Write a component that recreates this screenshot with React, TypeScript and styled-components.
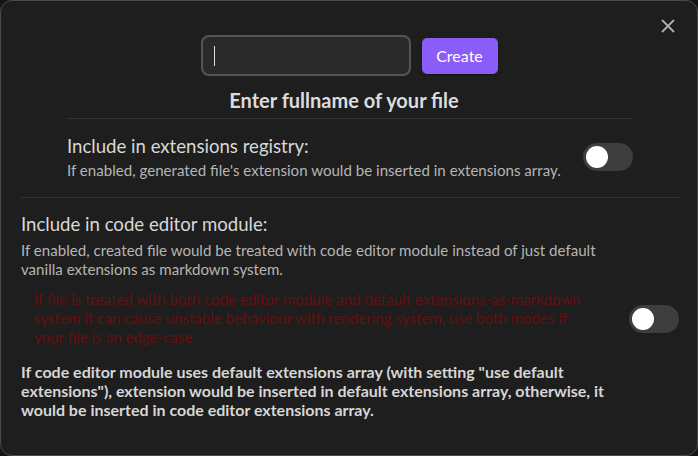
import React from "react";
import styled, { createGlobalStyle } from "styled-components";

const Global = createGlobalStyle`
  html, body { margin: 0; padding: 0; background: #141414; }
  body { font-family: "Lato", "Noto Sans", sans-serif; }
  * { box-sizing: border-box; }
`;

const Modal = styled.div`
  position: relative;
  width: 698px;
  height: 456px;
  background: #1e1e1e;
  border: 1px solid #4a4a4a;
  border-radius: 12px;
  padding: 34px 18px 0 20px;
  display: flex;
  flex-direction: column;
  color: #dadada;
  overflow: hidden;
`;

const Close = styled.button`
  position: absolute;
  top: 16px;
  right: 20px;
  width: 18px;
  height: 18px;
  padding: 0;
  border: none;
  background: none;
  color: #b0b0b0;
  display: flex;
  align-items: center;
  justify-content: center;
`;

const Header = styled.div`
  display: flex;
  justify-content: center;
  align-items: center;
  gap: 11px;
  margin-right: 2px;
`;

const NameInput = styled.div`
  width: 210px;
  height: 41px;
  border: 2px solid #545454;
  border-radius: 8px;
  background: #2a2a2a;
  display: flex;
  align-items: center;
  padding-left: 11px;
`;

const Caret = styled.span`
  width: 1px;
  height: 20px;
  background: #e0e0e0;
`;

const CreateButton = styled.button`
  width: 76px;
  height: 36px;
  border: none;
  border-radius: 5px;
  background: #8b5cf6;
  color: #fff;
  font-family: inherit;
  font-size: 16px;
  box-shadow: 0 1px 2px rgba(0,0,0,0.4);
`;

const Title = styled.div`
  text-align: center;
  font-weight: 700;
  font-size: 20px;
  margin-top: 12px;
  margin-right: 12px;
  color: #dcdcdc;
  line-height: 24px;
`;

const SettingRow = styled.div`
  display: flex;
  align-items: center;
  justify-content: space-between;
  margin: 6px 46px 0 46px;
  padding-top: 14px;
  border-top: 1px solid #333;
`;

const SettingInfo = styled.div`
  display: flex;
  flex-direction: column;
`;

const SettingName = styled.div`
  font-size: 18.6px;
  line-height: 26px;
  color: #d8d8d8;
`;

const SettingDesc = styled.div<{ $tone?: "warn"; $gap?: number }>`
  font-size: 15.1px;
  line-height: 19px;
  margin-top: ${(p) => p.$gap ?? 0}px;
  color: ${(p) => (p.$tone === "warn" ? "#660f0f" : "#b5b5b5")};
  max-width: 590px;
`;

const Divider = styled.div`
  height: 1px;
  background: #333;
  margin-top: 17px;
`;

const Section = styled.div`
  display: flex;
  flex-direction: column;
  padding-top: 13px;
`;

const WarnRow = styled.div`
  display: flex;
  align-items: center;
  justify-content: space-between;
  margin-top: 11px;
  padding-left: 13px;
`;

const WarnText = styled(SettingDesc)`
  max-width: 558px;
`;

const Note = styled.div`
  font-size: 16px;
  font-weight: 700;
  line-height: 19px;
  color: #d6d6d6;
  margin-top: 15px;
  max-width: 600px;
`;

const Track = styled.div`
  width: 50px;
  height: 28px;
  border-radius: 14px;
  background: #3e3e3e;
  padding: 3px;
  flex-shrink: 0;
  display: flex;
  align-items: center;
`;

const Knob = styled.div`
  width: 22px;
  height: 22px;
  border-radius: 50%;
  background: #fff;
`;

const Toggle = () => (
  <Track>
    <Knob />
  </Track>
);

export default function App() {
  return (
    <>
      <Global />
      <Modal>
        <Close aria-label="Close">
          <svg width="14" height="14" viewBox="0 0 14 14" fill="none" stroke="currentColor" strokeWidth="1.8" strokeLinecap="round">
            <path d="M1.5 1.5 L12.5 12.5 M12.5 1.5 L1.5 12.5" />
          </svg>
        </Close>
        <Header>
          <NameInput>
            <Caret />
          </NameInput>
          <CreateButton>Create</CreateButton>
        </Header>
        <Title>Enter fullname of your file</Title>
        <SettingRow>
          <SettingInfo>
            <SettingName>Include in extensions registry:</SettingName>
            <SettingDesc $gap={2}>If enabled, generated file's extension would be inserted in extensions array.</SettingDesc>
          </SettingInfo>
          <Toggle />
        </SettingRow>
        <Divider />
        <Section>
          <SettingName>Include in code editor module:</SettingName>
          <SettingDesc $gap={4}>
            If enabled, created file would be treated with code editor module instead of just default vanilla extensions as markdown system.
          </SettingDesc>
          <WarnRow>
            <WarnText $tone="warn">
              If file is treated with both code editor module and default extensions-as-markdown system it can cause unstable behaviour with rendering system, use both modes if your file is an edge-case.
            </WarnText>
            <Toggle />
          </WarnRow>
          <Note>
            If code editor module uses default extensions array (with setting "use default extensions"), extension would be inserted in default extensions array, otherwise, it would be inserted in code editor extensions array.
          </Note>
        </Section>
      </Modal>
    </>
  );
}
